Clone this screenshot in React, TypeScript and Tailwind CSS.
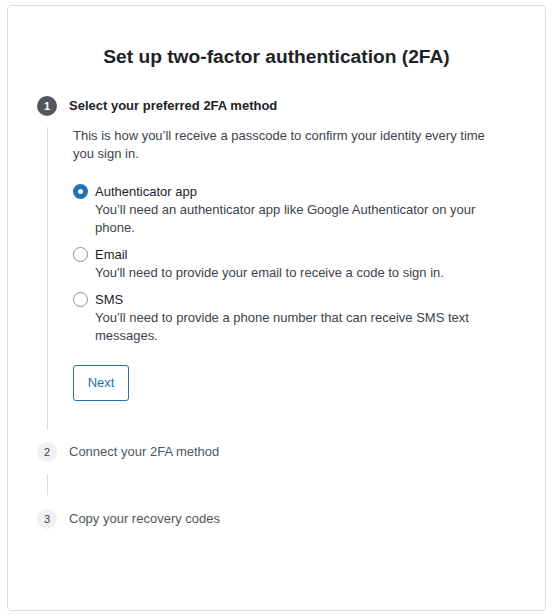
import React, { useState } from 'react';

type Option = { id: string; label: string; desc: string };

const options: Option[] = [
  { id: 'app', label: 'Authenticator app', desc: 'You’ll need an authenticator app like Google Authenticator on your phone.' },
  { id: 'email', label: 'Email', desc: "You'll need to provide your email to receive a code to sign in." },
  { id: 'sms', label: 'SMS', desc: 'You’ll need to provide a phone number that can receive SMS text messages.' },
];

const StepBadge = ({ n, active }: { n: number; active?: boolean }) => (
  <span
    className={
      active
        ? 'flex h-5 w-5 shrink-0 items-center justify-center rounded-full bg-[#50575e] text-[11px] font-semibold text-white'
        : 'flex h-5 w-5 shrink-0 items-center justify-center rounded-full bg-[#f0f0f1] text-[11px] text-[#3c434a]'
    }
  >
    {n}
  </span>
);

export default function App() {
  const [method, setMethod] = useState('app');

  return (
    <div className="bg-white px-[7px] pt-[5px] text-[13px] text-[#3c434a]" style={{ fontFamily: '"Liberation Sans", Arial, sans-serif' }}>
      <div className="h-[606px] rounded border border-[#dcdcde] px-[29px]">
        <h1 className="mt-[37px] text-center text-[19.2px] font-semibold leading-7 text-[#1d2327]">
          Set up two-factor authentication (2FA)
        </h1>

        {/* step 1 */}
        <div className="mt-[25px] flex items-center gap-3">
          <StepBadge n={1} active />
          <span className="font-semibold text-[#1d2327]">Select your preferred 2FA method</span>
        </div>
        <div className="ml-[10px] mt-[11px] border-l border-[#dcdcde] pb-[29px] pl-[25px] pr-[16px]">
          <p className="leading-[18px]">
            This is how you’ll receive a passcode to confirm your identity every time you sign in.
          </p>

          <div className="mt-[20px] flex flex-col gap-[9px]">
            {options.map((o) => (
              <label key={o.id} className="flex cursor-pointer gap-[7px]">
                <input
                  type="radio"
                  name="method"
                  checked={method === o.id}
                  onChange={() => setMethod(o.id)}
                  className="peer sr-only"
                />
                <span
                  className={
                    method === o.id
                      ? 'mt-[1px] flex h-[15px] w-[15px] shrink-0 items-center justify-center rounded-full bg-[#2271b1]'
                      : 'mt-[1px] h-[15px] w-[15px] shrink-0 rounded-full border border-[#8c8f94] bg-white'
                  }
                >
                  {method === o.id && <span className="h-[5px] w-[5px] rounded-full bg-white" />}
                </span>
                <span className="flex flex-col leading-[18px]">
                  <span className="text-[#1d2327]">{o.label}</span>
                  <span>{o.desc}</span>
                </span>
              </label>
            ))}
          </div>

          <button className="mt-[20px] h-9 w-14 rounded-[3px] border border-[#2271b1] bg-white text-[#2271b1]">
            Next
          </button>
        </div>

        {/* step 2 */}
        <div className="mt-[12px] flex items-center gap-3">
          <StepBadge n={2} />
          <span className="text-[#50575e]">Connect your 2FA method</span>
        </div>
        <div className="ml-[10px] mt-[12px] h-[21px] border-l border-[#dcdcde]" />

        {/* step 3 */}
        <div className="mt-[14px] flex items-center gap-3">
          <StepBadge n={3} />
          <span className="text-[#50575e]">Copy your recovery codes</span>
        </div>
      </div>
    </div>
  );
}
